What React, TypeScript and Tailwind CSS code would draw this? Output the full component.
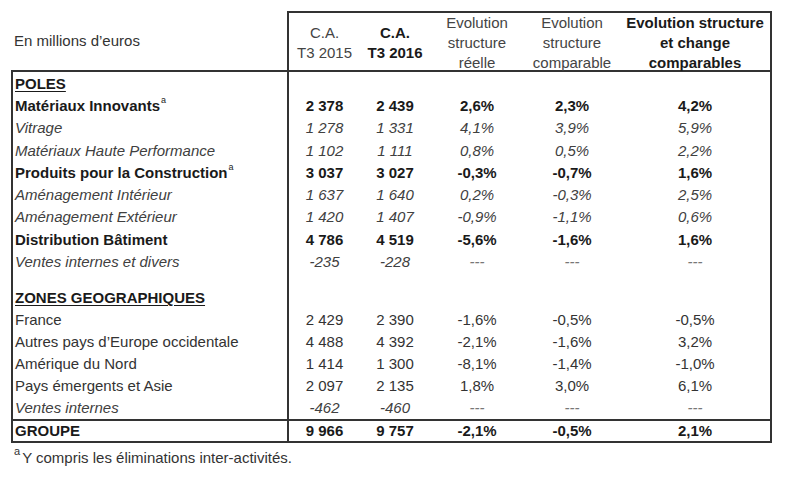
import React from "react";

type Row = {
  label: string;
  sup?: boolean;
  values: string[];
  kind: "bold" | "italic" | "plain";
};

const poles: Row[] = [
  { label: "Matériaux Innovants", sup: true, values: ["2 378", "2 439", "2,6%", "2,3%", "4,2%"], kind: "bold" },
  { label: "Vitrage", values: ["1 278", "1 331", "4,1%", "3,9%", "5,9%"], kind: "italic" },
  { label: "Matériaux Haute Performance", values: ["1 102", "1 111", "0,8%", "0,5%", "2,2%"], kind: "italic" },
  { label: "Produits pour la Construction", sup: true, values: ["3 037", "3 027", "-0,3%", "-0,7%", "1,6%"], kind: "bold" },
  { label: "Aménagement Intérieur", values: ["1 637", "1 640", "0,2%", "-0,3%", "2,5%"], kind: "italic" },
  { label: "Aménagement Extérieur", values: ["1 420", "1 407", "-0,9%", "-1,1%", "0,6%"], kind: "italic" },
  { label: "Distribution Bâtiment", values: ["4 786", "4 519", "-5,6%", "-1,6%", "1,6%"], kind: "bold" },
  { label: "Ventes internes et divers", values: ["-235", "-228", "---", "---", "---"], kind: "italic" },
];

const zones: Row[] = [
  { label: "France", values: ["2 429", "2 390", "-1,6%", "-0,5%", "-0,5%"], kind: "plain" },
  { label: "Autres pays d’Europe occidentale", values: ["4 488", "4 392", "-2,1%", "-1,6%", "3,2%"], kind: "plain" },
  { label: "Amérique du Nord", values: ["1 414", "1 300", "-8,1%", "-1,4%", "-1,0%"], kind: "plain" },
  { label: "Pays émergents et Asie", values: ["2 097", "2 135", "1,8%", "3,0%", "6,1%"], kind: "plain" },
  { label: "Ventes internes", values: ["-462", "-460", "---", "---", "---"], kind: "italic" },
];

const grid = "grid grid-cols-[276px_71px_70px_94px_96px_150px]";

const kindClass = (k: Row["kind"]) =>
  k === "bold"
    ? "font-bold text-[#1a1a1a]"
    : k === "italic"
      ? "italic text-[#404040]"
      : "text-[#333]";

function DataRow({ row, h }: { row: Row; h: string }) {
  return (
    <div className={`${grid} ${h} ${kindClass(row.kind)}`}>
      <div className="border-r-2 border-[#333] pl-[2px] flex items-center whitespace-nowrap">
        {row.label}
        {row.sup && <sup className="text-[9px] font-normal ml-[1px] -top-[5px]">a</sup>}
      </div>
      {row.values.map((v, i) => (
        <div key={i} className="flex items-center justify-center">
          <span className={v === "---" ? "text-[#777]" : ""}>{v}</span>
        </div>
      ))}
    </div>
  );
}

function SectionTitle({ title, h }: { title: string; h: string }) {
  return (
    <div className={`${grid} ${h}`}>
      <div className="border-r-2 border-[#333] pl-[2px] flex items-center font-bold underline underline-offset-2 text-[#1a1a1a]">
        {title}
      </div>
    </div>
  );
}

export default function App() {
  return (
    <div className="w-[800px] h-[487px] bg-white pt-[11px] pl-[11px] font-['Liberation_Sans',Arial,sans-serif] text-[15px] leading-[17px] text-[#333]">
      <div className="w-[761px]">
        {/* header */}
        <div className="flex h-[59px]">
          <div className="w-[278px] border-r-2 border-[#333] pl-[3px] flex items-center text-[#333]">
            En millions d’euros
          </div>
          <div className="flex-1 border-t-2 border-r-2 border-[#333] grid grid-cols-[71px_70px_94px_96px_150px] leading-[20px]">
            <div className="flex flex-col items-center justify-center text-[#444]">
              <span>C.A.</span>
              <span>T3 2015</span>
            </div>
            <div className="flex flex-col items-center justify-center font-bold text-[#1a1a1a]">
              <span>C.A.</span>
              <span>T3 2016</span>
            </div>
            <div className="flex flex-col items-center justify-center text-[#444]">
              <span>Evolution</span>
              <span>structure</span>
              <span>réelle</span>
            </div>
            <div className="flex flex-col items-center justify-center text-[#444]">
              <span>Evolution</span>
              <span>structure</span>
              <span>comparable</span>
            </div>
            <div className="flex flex-col items-center justify-center font-bold text-[#1a1a1a] whitespace-nowrap">
              <span>Evolution structure</span>
              <span>et change</span>
              <span>comparables</span>
            </div>
          </div>
        </div>

        {/* body */}
        <div className="border-2 border-[#333]">
          <SectionTitle title="POLES" h="h-[22.3px]" />
          {poles.map((r) => (
            <DataRow key={r.label} row={r} h="h-[22.3px]" />
          ))}
          <div className={`${grid} h-[14px]`}>
            <div className="border-r-2 border-[#333]" />
          </div>
          <SectionTitle title="ZONES GEOGRAPHIQUES" h="h-[22px]" />
          {zones.map((r) => (
            <DataRow key={r.label} row={r} h="h-[22px]" />
          ))}
          <div className="border-t-2 border-[#333]">
            <DataRow row={{ label: "GROUPE", values: ["9 966", "9 757", "-2,1%", "-0,5%", "2,1%"], kind: "bold" }} h="h-[20px]" />
          </div>
        </div>

        {/* footnote */}
        <div className="mt-[6px] pl-[3px] text-[#333] flex">
          <span className="text-[11px] leading-[10px] -mt-[3px] mr-[2px]">a</span>
          <span>Y compris les éliminations inter-activités.</span>
        </div>
      </div>
    </div>
  );
}
